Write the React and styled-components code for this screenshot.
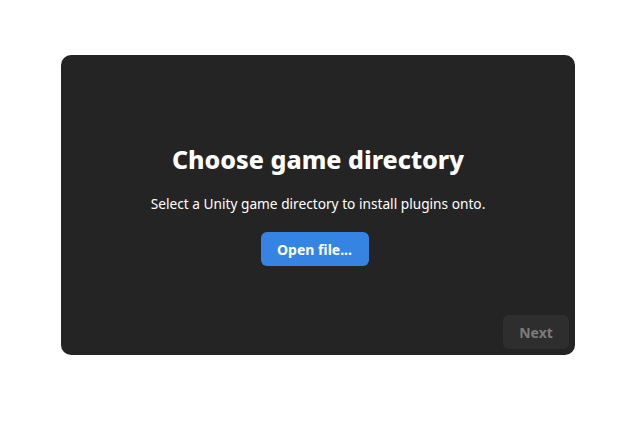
import React from "react";
import styled, { createGlobalStyle } from "styled-components";

const GlobalStyle = createGlobalStyle`
  body {
    margin: 0;
    background: #ffffff;
    font-family: "Noto Sans", "Open Sans", sans-serif;
  }
`;

const Page = styled.div`
  padding: 55px 61px;
`;

const Card = styled.div`
  width: 514px;
  height: 300px;
  box-sizing: border-box;
  background: #242424;
  border-radius: 10px;
  display: grid;
  grid-template-areas: "stack";
  padding: 6px;
`;

const Content = styled.div`
  grid-area: stack;
  align-self: center;
  display: flex;
  flex-direction: column;
  align-items: center;
`;

const Title = styled.h1`
  margin: 0;
  color: #ffffff;
  font-size: 25px;
  font-weight: 800;
  line-height: 30px;
`;

const Subtitle = styled.p`
  margin: 20px 0 0;
  color: #ffffff;
  font-size: 13.7px;
  line-height: 20px;
`;

const Button = styled.button`
  font-family: inherit;
  font-size: 14px;
  font-weight: 700;
  border: none;
  border-radius: 6px;
  height: 34px;
  padding: 0;
  white-space: nowrap;
  cursor: pointer;
  color: ${p => (p.disabled ? "#7b7b7b" : "#ffffff")};
  background: ${p => (p.$primary ? "#3584e4" : "#2e2e2e")};
`;

const OpenButton = styled(Button)`
  margin: 18px 7px 0 0;
  width: 108px;
`;

const NextButton = styled(Button)`
  grid-area: stack;
  align-self: end;
  justify-self: end;
  width: 66px;
`;

export default function App() {
  return (
    <>
      <GlobalStyle />
      <Page>
        <Card>
          <Content>
            <Title>Choose game directory</Title>
            <Subtitle>Select a Unity game directory to install plugins onto.</Subtitle>
            <OpenButton $primary>Open file...</OpenButton>
          </Content>
          <NextButton disabled>Next</NextButton>
        </Card>
      </Page>
    </>
  );
}
